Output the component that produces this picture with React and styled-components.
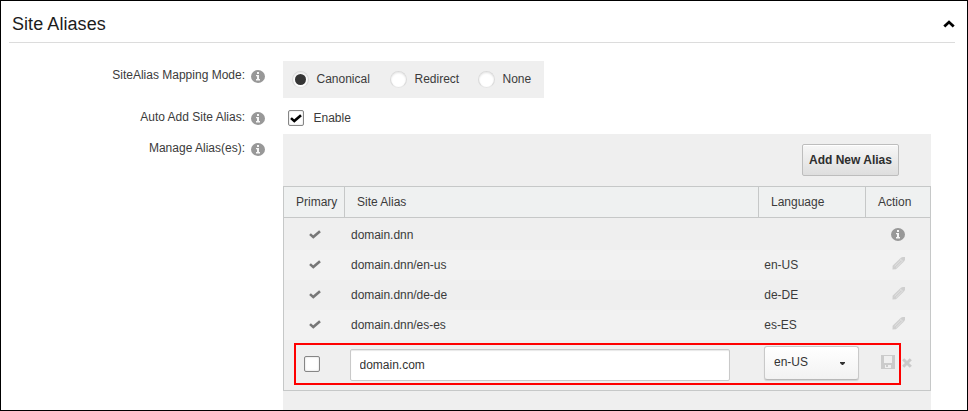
import React from "react";
import styled, { createGlobalStyle, css } from "styled-components";

const GlobalStyle = createGlobalStyle`
  *, *::before, *::after { box-sizing: border-box; }
  body { margin: 0; background: #fff; }
`;

const Frame = styled.main`
  height: 411px;
  overflow: hidden;
  border: 1px solid #000;
  padding: 0 12px 0 8px;
  background: #fff;
  color: #3b3b3b;
  font: 12px/18px "Liberation Sans", Arial, sans-serif;
`;

const Header = styled.header`
  display: flex;
  justify-content: space-between;
  height: 42px;
  padding: 12px 0 0 3px;
  border-bottom: 1px solid #dcdcdc;
`;

const Title = styled.h2`
  margin: 0;
  font-size: 18px;
  line-height: 22px;
  font-weight: 400;
  letter-spacing: 0.06px;
  color: #1c1c1c;
`;

const Collapse = styled.svg`
  margin-top: 6px;
  width: 12px;
  height: 9px;
`;

const Form = styled.section`
  padding-top: 18px;
`;

const Field = styled.div`
  display: grid;
  grid-template-columns: 256px 648px;
  column-gap: 18px;
  height: ${(p) => p.$height}px;
`;

const Label = styled.div`
  display: flex;
  justify-content: flex-end;
  gap: 6px;
  height: 18px;
  margin-top: ${(p) => p.$top}px;
  white-space: nowrap;
`;

const InfoIcon = styled.svg`
  width: 14px;
  height: 13px;
  flex: none;
  margin-top: ${(p) => p.$top}px;
`;

const RadioGroup = styled.div`
  display: flex;
  width: 261px;
  height: 37px;
  padding: 10px 0 0 9px;
  background: #efefef;
`;

const RadioOption = styled.div`
  display: flex;
  gap: 7.5px;
  width: ${(p) => p.$width}px;
  line-height: 17px;
`;

const Radio = styled.span`
  display: flex;
  align-items: center;
  justify-content: center;
  width: 17px;
  height: 17px;
  border: 1px solid #dadada;
  border-bottom-color: #e4e4e4;
  border-radius: 50%;
  background: #fff;
  box-shadow: inset 0 1px 2px #e4e4e4;

  &::after {
    content: "";
    width: 11px;
    height: 11px;
    border-radius: 50%;
    background: ${(p) => (p.$on ? "#363636" : "transparent")};
  }
`;

const CheckOption = styled.div`
  display: flex;
  gap: 9.5px;
  padding: 12px 0 0 5px;
  line-height: 17px;
`;

const CheckBox = styled.span`
  display: flex;
  align-items: center;
  justify-content: center;
  width: 16px;
  height: 16px;
  border: 1px solid #868686;
  border-radius: 2px;
  background: #fff;
  box-shadow: inset 0 0 2px #ccc;
`;

const Tick = styled.svg`
  width: 12px;
  height: 9px;
  flex: none;
`;

const Panel = styled.div`
  height: 276px;
  background: #efefef;
`;

const Toolbar = styled.div`
  display: flex;
  justify-content: flex-end;
  height: 52px;
  padding: 10px 32px 0 0;
`;

const AddButton = styled.button`
  width: 97px;
  height: 32px;
  padding: 0;
  border: 1px solid #bdbdbd;
  border-radius: 2px;
  background: linear-gradient(#f7f7f7, #dedede);
  box-shadow: inset 0 1px 0 #fff;
  color: #2e2e2e;
  font: bold 12px/30px "Liberation Sans", Arial, sans-serif;
  white-space: nowrap;
`;

const Table = styled.div`
  position: relative;
  height: 205px;
  border: 1px solid #c6c8c8;
`;

const columns = css`
  display: grid;
  grid-template-columns: 61px 414px 107px 64px;
`;

const HeadRow = styled.div`
  ${columns}
  height: 31px;
  border-bottom: 1px solid #c6c8c8;
  background: #eff1f1;
`;

const HeadCell = styled.div`
  padding: 6px 0 0 12px;
  border-right: 1px solid #c6c8c8;

  &:last-child { border-right: 0; }
`;

const Row = styled.div`
  ${columns}
  height: ${(p) => p.$height}px;
  background: ${(p) => (p.$alt ? "#f2f2f2" : "#efefef")};
  line-height: ${(p) => p.$line}px;
`;

const IconCell = styled.div`
  display: flex;
  justify-content: center;
  padding-top: ${(p) => p.$top}px;
`;

const TextCell = styled.div`
  padding-left: ${(p) => p.$left}px;
  letter-spacing: -0.04px;
`;

const Pencil = styled.svg`
  width: 13px;
  height: 13px;
`;

const PrimaryCell = styled.div`
  padding: 16px 0 0 20px;
`;

const AliasInput = styled.input`
  display: block;
  width: 380px;
  height: 32px;
  margin: 9px 0 0 5px;
  padding: 0 8.5px;
  border: 1px solid #c9c9c9;
  border-radius: 2px;
  outline: 0;
  box-shadow: inset 0 1px 1px #e8e8e8;
  background: #fff;
  color: #333;
  font: 12px "Liberation Sans", Arial, sans-serif;
`;

const Select = styled.div`
  display: flex;
  justify-content: space-between;
  width: 95px;
  height: 34px;
  margin: 6px 0 0 5px;
  padding: 0 13px 0 9px;
  border: 1px solid #c9c9c9;
  border-bottom-color: #b8b8b8;
  border-radius: 3px;
  background: linear-gradient(#fff, #f2f2f2);
  box-shadow: 0 1px 1px #d0d0d0;
  color: #333;
  line-height: 31px;
`;

const Caret = styled.svg`
  width: 5px;
  height: 3px;
  margin-top: 15px;
`;

const Actions = styled.div`
  display: flex;
  gap: 7px;
  padding: 15px 0 0 15px;
`;

const SaveIcon = styled.svg`
  width: 14px;
  height: 14px;
`;

const RemoveIcon = styled.svg`
  width: 10px;
  height: 10px;
  margin-top: 3px;
`;

const Highlight = styled.div`
  position: absolute;
  left: 10px;
  top: 156px;
  width: 607px;
  height: 42px;
  border: 2px solid #fe0000;
  pointer-events: none;
`;

const Info = ({ top = 0 }) => (
  <InfoIcon $top={top} viewBox="0 0 14 13">
    <ellipse cx="7" cy="6.5" rx="7" ry="6.5" fill="#989898" />
    <path d="M6 2H8V4H6ZM5 5H8V9H9V10.5H5V9H6V6.3H5Z" fill="#f6f6f6" />
  </InfoIcon>
);

const TickMark = ({ color }) => (
  <Tick viewBox="0 0 12 9">
    <path d="M1 4.1 4.3 7.1 11 1.2" fill="none" stroke={color} strokeWidth="2.6" />
  </Tick>
);

const PencilMark = () => (
  <Pencil viewBox="0 0 13 13">
    <path d="M.5 12.5 .6 8.8 8.6 1Q9.8 0 11 0H13V2.5Q12.8 3.6 12 4.4L4 12.2Z" fill="#cfcfcf" />
    <path d="M2.5 9.2 8.9 2.9M3.9 10.6 10.3 4.3M8.2 1.8 11.2 4.8" stroke="#ebebeb" strokeWidth=".7" />
  </Pencil>
);

const rows = [
  { alias: "domain.dnn", language: "", height: 32, line: 34 },
  { alias: "domain.dnn/en-us", language: "en-US", height: 30, line: 30, alt: true },
  { alias: "domain.dnn/de-de", language: "de-DE", height: 30, line: 30 },
  { alias: "domain.dnn/es-es", language: "es-ES", height: 30, line: 30, alt: true },
];

const modes = [
  { name: "Canonical", width: 98, on: true },
  { name: "Redirect", width: 88 },
  { name: "None", width: 60 },
];

export default function App() {
  return (
    <Frame>
      <GlobalStyle />
      <Header>
        <Title>Site Aliases</Title>
        <Collapse viewBox="0 0 12 9">
          <path d="M1.3 7.6 6 3.1 10.7 7.6" fill="none" stroke="#000" strokeWidth="2.8" />
        </Collapse>
      </Header>
      <Form>
        <Field $height={37}>
          <Label $top={5}>SiteAlias Mapping Mode:<Info top={4} /></Label>
          <RadioGroup>
            {modes.map((m) => (
              <RadioOption key={m.name} $width={m.width}>
                <Radio $on={m.on} />{m.name}
              </RadioOption>
            ))}
          </RadioGroup>
        </Field>
        <Field $height={36}>
          <Label $top={10}>Auto Add Site Alias:<Info top={4} /></Label>
          <CheckOption><CheckBox><TickMark color="#000" /></CheckBox>Enable</CheckOption>
        </Field>
        <Field $height={276}>
          <Label $top={5}>Manage Alias(es):<Info top={4} /></Label>
          <Panel>
            <Toolbar><AddButton>Add New Alias</AddButton></Toolbar>
            <Table>
              <HeadRow>
                <HeadCell>Primary</HeadCell>
                <HeadCell>Site Alias</HeadCell>
                <HeadCell>Language</HeadCell>
                <HeadCell>Action</HeadCell>
              </HeadRow>
              {rows.map((r) => (
                <Row key={r.alias} $height={r.height} $line={r.line} $alt={r.alt}>
                  <IconCell $top={r.language ? 10 : 12}><TickMark color="#777" /></IconCell>
                  <TextCell $left={6}>{r.alias}</TextCell>
                  <TextCell $left={5.3}>{r.language}</TextCell>
                  <IconCell $top={r.language ? 7 : 10}>
                    {r.language ? <PencilMark /> : <Info />}
                  </IconCell>
                </Row>
              ))}
              <Row $height={50} $line={18}>
                <PrimaryCell><CheckBox /></PrimaryCell>
                <div><AliasInput defaultValue="domain.com" /></div>
                <div>
                  <Select>
                    en-US
                    <Caret viewBox="0 0 5 3"><path d="M0 0H5V1L3 3H2L0 1Z" fill="#333" /></Caret>
                  </Select>
                </div>
                <Actions>
                  <SaveIcon viewBox="0 0 14 14">
                    <path fillRule="evenodd" d="M0 0H14V14H0ZM3 1V8H11V1ZM4 10V13H10V10Z" fill="#cbcbcb" />
                    <path d="M5 10H7V12H5Z" fill="#cbcbcb" />
                  </SaveIcon>
                  <RemoveIcon viewBox="0 0 10 10">
                    <path d="M1.2 1.2 8.8 8.8M8.8 1.2 1.2 8.8" stroke="#c9c9c9" strokeWidth="3" />
                  </RemoveIcon>
                </Actions>
              </Row>
              <Highlight />
            </Table>
          </Panel>
        </Field>
      </Form>
    </Frame>
  );
}
